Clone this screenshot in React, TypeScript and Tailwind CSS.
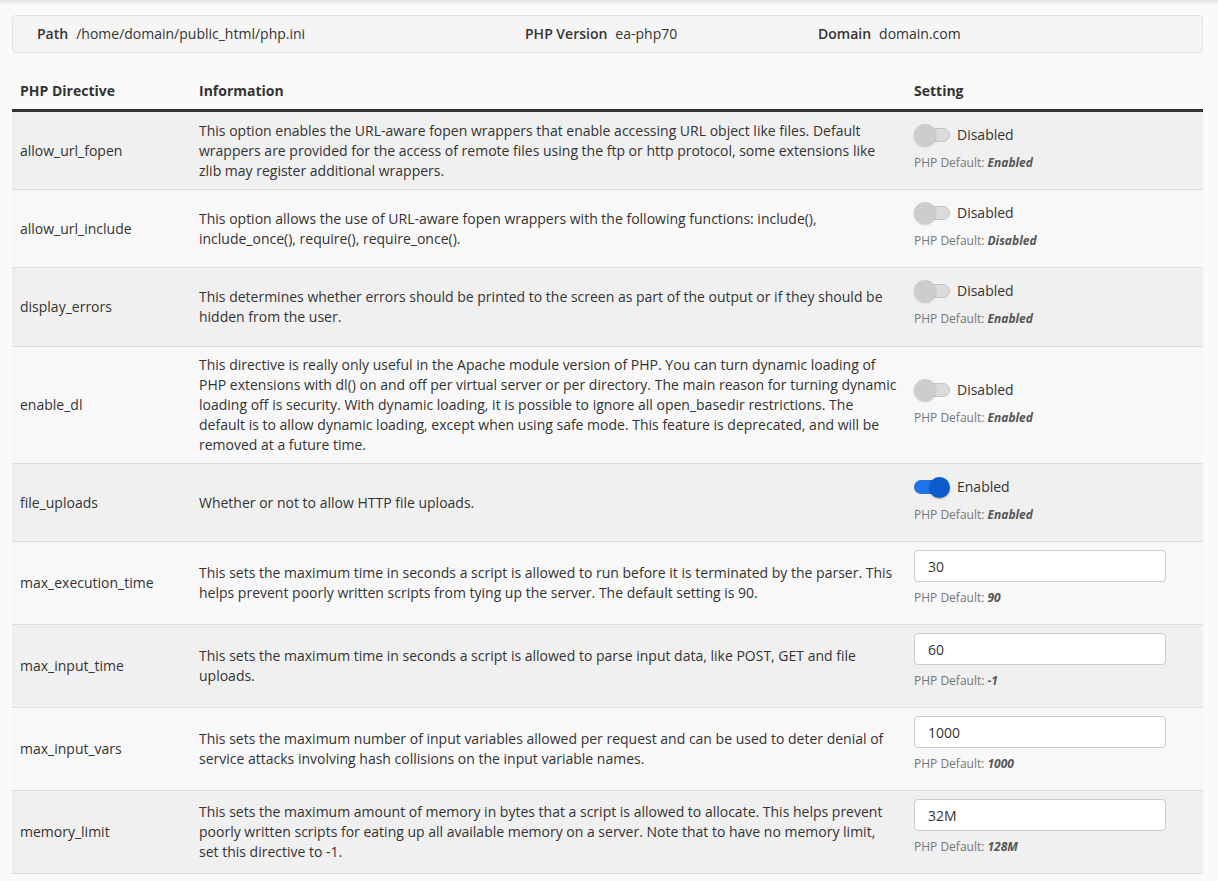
import { useState } from "react";

interface Directive {
  name: string;
  info: string;
  kind: "toggle" | "text";
  value: string | boolean;
  def: string;
}

const directives: Directive[] = [
  {
    name: "allow_url_fopen",
    info: "This option enables the URL-aware fopen wrappers that enable accessing URL object like files. Default wrappers are provided for the access of remote files using the ftp or http protocol, some extensions like zlib may register additional wrappers.",
    kind: "toggle",
    value: false,
    def: "Enabled",
  },
  {
    name: "allow_url_include",
    info: "This option allows the use of URL-aware fopen wrappers with the following functions: include(), include_once(), require(), require_once().",
    kind: "toggle",
    value: false,
    def: "Disabled",
  },
  {
    name: "display_errors",
    info: "This determines whether errors should be printed to the screen as part of the output or if they should be hidden from the user.",
    kind: "toggle",
    value: false,
    def: "Enabled",
  },
  {
    name: "enable_dl",
    info: "This directive is really only useful in the Apache module version of PHP. You can turn dynamic loading of PHP extensions with dl() on and off per virtual server or per directory. The main reason for turning dynamic loading off is security. With dynamic loading, it is possible to ignore all open_basedir restrictions. The default is to allow dynamic loading, except when using safe mode. This feature is deprecated, and will be removed at a future time.",
    kind: "toggle",
    value: false,
    def: "Enabled",
  },
  {
    name: "file_uploads",
    info: "Whether or not to allow HTTP file uploads.",
    kind: "toggle",
    value: true,
    def: "Enabled",
  },
  {
    name: "max_execution_time",
    info: "This sets the maximum time in seconds a script is allowed to run before it is terminated by the parser. This helps prevent poorly written scripts from tying up the server. The default setting is 90.",
    kind: "text",
    value: "30",
    def: "90",
  },
  {
    name: "max_input_time",
    info: "This sets the maximum time in seconds a script is allowed to parse input data, like POST, GET and file uploads.",
    kind: "text",
    value: "60",
    def: "-1",
  },
  {
    name: "max_input_vars",
    info: "This sets the maximum number of input variables allowed per request and can be used to deter denial of service attacks involving hash collisions on the input variable names.",
    kind: "text",
    value: "1000",
    def: "1000",
  },
  {
    name: "memory_limit",
    info: "This sets the maximum amount of memory in bytes that a script is allowed to allocate. This helps prevent poorly written scripts for eating up all available memory on a server. Note that to have no memory limit, set this directive to -1.",
    kind: "text",
    value: "32M",
    def: "128M",
  },
];

function Toggle({ on, onClick }: { on: boolean; onClick: () => void }) {
  return (
    <button onClick={onClick} className="relative w-9 h-[22px] shrink-0">
      <span
        className={
          on
            ? "absolute left-0 right-[6px] top-[4px] h-[14px] rounded-full bg-[#1f74e6]"
            : "absolute left-[8px] right-0 top-[4px] h-[14px] rounded-full bg-[#dcdcdc] border border-[#c4c4c4]"
        }
      />
      <span
        className={
          on
            ? "absolute right-0 top-[1px] w-[21px] h-[21px] rounded-full bg-[#0a5ccc] shadow-[0_1px_2px_rgba(0,0,0,0.3)]"
            : "absolute left-0 top-0 w-[22px] h-[22px] rounded-full bg-[#cdcdcd] shadow-[0_1px_2px_rgba(0,0,0,0.2)]"
        }
      />
    </button>
  );
}

function SettingCell({ d, tall }: { d: Directive; tall: boolean }) {
  const [val, setVal] = useState(d.value);
  return (
    <div>
      {d.kind === "toggle" ? (
        <div className="flex items-center h-7 pt-[2px]">
          <Toggle on={val as boolean} onClick={() => setVal(!val)} />
          <span className="ml-[7px]">{val ? "Enabled" : "Disabled"}</span>
        </div>
      ) : (
        <input
          value={val as string}
          onChange={(e) => setVal(e.target.value)}
          className="block w-[252px] h-8 px-[13px] bg-white border border-[#cccccc] rounded text-sm text-[#333] outline-none"
        />
      )}
      <div
        className={
          d.kind === "toggle"
            ? tall
              ? "mt-1.5 mb-[10px] text-xs leading-[18px] text-[#777]"
              : "mt-1.5 mb-[9px] text-xs leading-[18px] text-[#777]"
            : "mt-[7px] mb-[9px] text-xs leading-[18px] text-[#777]"
        }
      >
        PHP Default: <span className="font-bold italic text-[#555]">{d.def}</span>
      </div>
    </div>
  );
}

export default function App() {
  return (
    <div
      className="min-h-screen bg-[#fafafa] text-sm leading-5 text-[#333]"
      style={{ fontFamily: '"Open Sans", "Liberation Sans", sans-serif' }}
    >
      <div className="h-[5px] bg-gradient-to-b from-[#e2e2e2] to-[#fafafa]" />
      <div className="pl-3 pr-[15px] pt-[10px]">
        <div className="flex items-center px-[24px] py-2 bg-[#f5f5f5] border border-[#e3e3e3] rounded">
          <div className="w-[488px]">
            <span className="font-semibold">Path</span>
            <span className="ml-2">/home/domain/public_html/php.ini</span>
          </div>
          <div className="w-[293px]">
            <span className="font-semibold">PHP Version</span>
            <span className="ml-2">ea-php70</span>
          </div>
          <div>
            <span className="font-semibold">Domain</span>
            <span className="ml-2">domain.com</span>
          </div>
        </div>

        <table className="mt-5 w-full table-fixed border-collapse">
          <colgroup>
            <col className="w-[179px]" />
            <col />
            <col className="w-[297px]" />
          </colgroup>
          <thead>
            <tr className="border-b-[3px] border-[#333]">
              <th className="px-2 py-2 text-left font-bold">PHP Directive</th>
              <th className="px-2 py-2 text-left font-bold">Information</th>
              <th className="px-2 py-2 text-left font-bold">Setting</th>
            </tr>
          </thead>
          <tbody>
            {directives.map((d, i) => (
              <tr
                key={d.name}
                className={
                  i % 2 === 0
                    ? "bg-[#f0f0f0] border-b border-[#dddddd]"
                    : "bg-[#f8f8f8] border-b border-[#dddddd]"
                }
              >
                <td className="px-2 py-2 align-middle">{d.name}</td>
                <td className="px-2 py-2 align-middle">{d.info}</td>
                <td className="px-2 py-2 align-middle">
                  <SettingCell d={d} tall={i === 2} />
                </td>
              </tr>
            ))}
          </tbody>
        </table>
      </div>
    </div>
  );
}
